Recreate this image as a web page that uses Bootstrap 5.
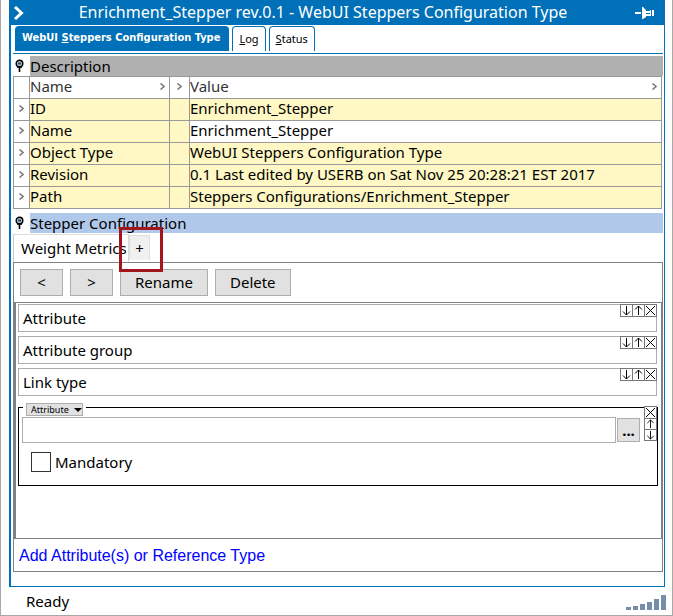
<!DOCTYPE html>
<html lang="en">
<head>
<meta charset="utf-8">
<meta name="viewport" content="width=device-width, initial-scale=1">
<title>Enrichment_Stepper rev.0.1</title>
<link href="https://cdn.jsdelivr.net/npm/bootstrap@5.3.0/dist/css/bootstrap.min.css" rel="stylesheet">
<style>
:root{--blue:#0070b8;--line:#999;--edge:#808086}
body{font:15px/20px "Noto Sans","Open Sans",sans-serif;color:#000;background:#fff}
.frame{border:1px solid #a8a8a8;border-top:0}
.editor{margin:0 7px 0 8px;border:1px solid var(--blue);border-top:0;border-left-width:2px}
.titlebar{background:var(--blue);color:#fff;height:25px;padding:0 9px 0 2px}
.titlebar h1{font-size:16px;line-height:25px;font-weight:400;padding-right:14px}
.tabs{gap:3px;margin:1px 1px 0 2px;padding:0 0 2px 2px;border-bottom:1px solid var(--blue)}
.tabs button{height:25px;border:1px solid var(--blue);border-bottom:0;border-radius:4px 4px 0 0;background:#fff;color:#000;font-size:11px;line-height:22px;padding:0 6px}
.tabs .current{background:var(--blue);color:#fff;font-weight:700;font-family:"DejaVu Sans Condensed","Noto Sans",sans-serif;padding:0 8px 2px 6px}
.content{padding:2px 1px 14px 2px}
.sect h2{font-size:15px;line-height:20px;font-weight:400;background:#b0b0b0}
.sect.active h2{background:#b0c8ea}
.sect svg{width:17px;padding:0 5px 0 1px}
.props{width:calc(100% - 1px);table-layout:fixed;border-collapse:collapse;margin-bottom:4px}
.props td,.props th{border:1px solid var(--line);height:22px;padding:0 0 2px;line-height:19px;font-weight:400;background:#fff8c4;white-space:nowrap}
.props th,.props .plain,.props td:first-child{background:#fff}
.props th{color:#333}
.props svg{display:block;margin:0 auto}
.c1{width:16px}.c2{width:140px}.c3{width:20px}
.steps{padding-top:1px}
.steps .step{border:1px solid #ddd;border-bottom:0;border-left-color:#ccc;background:#fff;padding:0 0 2px 7px;height:28px;width:116px;white-space:nowrap;text-align:left}
.steps .plus{position:relative;width:21px;height:25px;margin-top:1px;border:1px solid #ddd;border-bottom:0;background:#f0f0f0;padding:0}
.marker{position:absolute;left:-11px;top:-9px;width:44px;height:45px;border:3px solid #a3161c;pointer-events:none}
.pane{border:1px solid var(--edge)}
.tools{gap:7px;padding:6px}
.tools button,.more{background:#e1e1e1;border:1px solid #adadad;color:#000;height:27px;padding:0 14px 2px}
.tools .step-nav{width:43px;padding:0 0 2px}
.rules{border:1px solid var(--edge);border-left-width:2px;padding:1px 4px 0 2px}
.rule{border:1px solid #adadad;height:28px;margin-bottom:4px;padding-left:4px;line-height:27px}
.mini{display:flex;margin:-1px -1px 0 0}
.mini button{display:block;width:13px;height:13px;padding:0;margin-left:-1px;border:1px solid #777;background:#fff}
.mini svg,.side svg{display:block}
.detail{position:relative;border:1px solid #000;margin:11px -1px 0 0;padding:9px 17px 13px 3px}
.kindbox{position:absolute;left:4px;top:-5px;background:#fff;padding:0 3px;display:flex}
.kind{appearance:none;width:57px;height:13px;border:1px solid #adadad;border-radius:0;font-size:9px;line-height:11px;padding:0 0 0 4px;color:#000;background:#e1e1e1 url("data:image/svg+xml,%3Csvg xmlns='http://www.w3.org/2000/svg' width='8' height='4'%3E%3Cpath d='M0 0h8L4 4z'/%3E%3C/svg%3E") no-repeat right 0 top 4px}
.side{position:absolute;right:0;top:-2px}
.side button{display:block;width:13px;height:12px;padding:0;margin-bottom:-1px;border:1px solid #777;background:#fff}
.side button:first-child{height:13px}
.field{height:26px;border:1px solid #adadad;min-width:0;margin-right:1px}
.more{width:23px;height:24px;padding:0;line-height:20px;font-weight:700}
.tick{appearance:none;width:20px;height:20px;border:1px solid #333;background:#fff;margin:0}
.need{margin:9px 0 0 9px;gap:4px}
.add{padding:6px 5px 5px}
.add a{color:#00f;text-decoration:none;font:16px/20px "Liberation Sans",Arial,sans-serif}
.status{padding:4px 6px 3px 25px;height:28px}
</style>
<script src="https://cdn.jsdelivr.net/npm/bootstrap@5.3.0/dist/js/bootstrap.bundle.min.js"></script>
</head>
<body>
<svg class="d-none" aria-hidden="true">
<symbol id="down" viewBox="0 0 11 11"><path d="M5.5 1v9M2 6.5l3.500 3.500L9 6.500" fill="none" stroke="#000"/></symbol>
<symbol id="up" viewBox="0 0 11 11"><path d="M5.500 10V1M2 4.500L5.500 1L9 4.500" fill="none" stroke="#000"/></symbol>
<symbol id="cross" viewBox="0 0 11 11"><path d="M1 1l9 9M10 1L1 10" fill="none" stroke="#000"/></symbol>
<symbol id="chev" viewBox="0 0 5 7"><path d="M.5 .5L4 3.500L.5 6.500" fill="none" stroke="#777" stroke-width="1.500"/></symbol>
<symbol id="pin" viewBox="0 0 11 14"><circle cx="5.500" cy="4.500" r="3.300" fill="#a9bccb" stroke="#000" stroke-width="1.400"/><path d="M4 3.500h3v2H4z" fill="#34495c"/><path d="M3 8h5M5.500 8v5" stroke="#000" stroke-width="1.600"/></symbol>
</svg>
<div class="frame d-flex flex-column min-vh-100">
<main class="editor d-flex flex-column flex-grow-1">
<header class="titlebar d-flex align-items-center">
<svg width="12" height="14" viewBox="0 0 12 14"><path d="M2 1l6.500 6L2 13" fill="none" stroke="#fff" stroke-width="3"/></svg>
<h1 class="flex-grow-1 text-center mb-0">Enrichment_Stepper rev.0.1 - WebUI Steppers Configuration Type</h1>
<svg width="20" height="12" viewBox="0 0 20 12"><path d="M0 5h6v2H0zM7 0h1l3 3v1h4v5h-4v1l-3 2H7zM15 3h1v6h-1zM17 3h2v6h-2z" fill="#fff"/><path d="M11 6.500h4" stroke="#0070b8"/></svg>
</header>
<nav class="tabs d-flex" aria-label="Views">
<button class="current" type="button">WebUI <u>S</u>teppers Configuration Type</button>
<button type="button"><u>L</u>og</button>
<button type="button"><u>S</u>tatus</button>
</nav>
<div class="content d-flex flex-column flex-grow-1">
<section>
<div class="sect d-flex align-items-center"><svg height="14"><use href="#pin" width="11" height="14"/></svg><h2 class="flex-grow-1 m-0">Description</h2></div>
<table class="props">
<colgroup><col class="c1"><col class="c2"><col class="c3"><col></colgroup>
<thead><tr><th></th><th><div class="d-flex align-items-center justify-content-between pe-1"><span>Name</span><svg class="m-0" width="5" height="7"><use href="#chev"/></svg></div></th><th><svg width="5" height="7"><use href="#chev"/></svg></th><th><div class="d-flex align-items-center justify-content-between pe-1"><span>Value</span><svg class="m-0" width="5" height="7"><use href="#chev"/></svg></div></th></tr></thead>
<tbody>
<tr><td><svg width="5" height="7"><use href="#chev"/></svg></td><td>ID</td><td></td><td>Enrichment_Stepper</td></tr>
<tr><td><svg width="5" height="7"><use href="#chev"/></svg></td><td>Name</td><td></td><td class="plain">Enrichment_Stepper</td></tr>
<tr><td><svg width="5" height="7"><use href="#chev"/></svg></td><td>Object Type</td><td></td><td>WebUI Steppers Configuration Type</td></tr>
<tr><td><svg width="5" height="7"><use href="#chev"/></svg></td><td>Revision</td><td></td><td>0.1 Last edited by USERB on Sat Nov 25 20:28:21 EST 2017</td></tr>
<tr><td><svg width="5" height="7"><use href="#chev"/></svg></td><td>Path</td><td></td><td>Steppers Configurations/Enrichment_Stepper</td></tr>
</tbody>
</table>
</section>
<section class="d-flex flex-column flex-grow-1">
<div class="sect active d-flex align-items-center"><svg height="14"><use href="#pin" width="11" height="14"/></svg><h2 class="flex-grow-1 m-0">Stepper Configuration</h2></div>
<div class="steps d-flex">
<button class="step" type="button">Weight Metrics</button>
<button class="plus" type="button">+<span class="marker"></span></button>
</div>
<div class="pane d-flex flex-column flex-grow-1">
<div class="tools d-flex">
<button class="step-nav" type="button">&lt;</button>
<button class="step-nav" type="button">&gt;</button>
<button type="button">Rename</button>
<button type="button">Delete</button>
</div>
<div class="rules flex-grow-1">
<div class="rule d-flex justify-content-between align-items-start"><span>Attribute</span><span class="mini"><button type="button" aria-label="Move down"><svg width="11" height="11"><use href="#down"/></svg></button><button type="button" aria-label="Move up"><svg width="11" height="11"><use href="#up"/></svg></button><button type="button" aria-label="Remove"><svg width="11" height="11"><use href="#cross"/></svg></button></span></div>
<div class="rule d-flex justify-content-between align-items-start"><span>Attribute group</span><span class="mini"><button type="button" aria-label="Move down"><svg width="11" height="11"><use href="#down"/></svg></button><button type="button" aria-label="Move up"><svg width="11" height="11"><use href="#up"/></svg></button><button type="button" aria-label="Remove"><svg width="11" height="11"><use href="#cross"/></svg></button></span></div>
<div class="rule d-flex justify-content-between align-items-start"><span>Link type</span><span class="mini"><button type="button" aria-label="Move down"><svg width="11" height="11"><use href="#down"/></svg></button><button type="button" aria-label="Move up"><svg width="11" height="11"><use href="#up"/></svg></button><button type="button" aria-label="Remove"><svg width="11" height="11"><use href="#cross"/></svg></button></span></div>
<div class="detail">
<div class="kindbox"><select class="kind" aria-label="Kind"><option>Attribute</option></select></div>
<div class="side"><button type="button" aria-label="Remove"><svg width="11" height="11"><use href="#cross"/></svg></button><button type="button" aria-label="Move up"><svg width="11" height="10"><use href="#up"/></svg></button><button type="button" aria-label="Move down"><svg width="11" height="10"><use href="#down"/></svg></button></div>
<div class="d-flex align-items-center"><input class="field flex-grow-1" type="text" aria-label="Attribute"><button class="more" type="button" aria-label="Browse">...</button></div>
<div class="need d-flex align-items-center"><input class="tick" type="checkbox" id="mandatory"><label for="mandatory">Mandatory</label></div>
</div>
</div>
<div class="add"><a href="#">Add Attribute(s) or Reference Type</a></div>
</div>
</section>
</div>
</main>
<footer class="status d-flex justify-content-between align-items-start">
<span>Ready</span>
<svg class="mt-1" width="40" height="15" viewBox="0 0 40 15" fill="#768ea8"><path d="M0 12h5v3H0zM7 11h5v4H7zM14 9h5v6h-5zM21 7h5v8h-5zM28 4h5v11h-5zM35 0h5v15h-5z"/></svg>
</footer>
</div>
</body>
</html>
